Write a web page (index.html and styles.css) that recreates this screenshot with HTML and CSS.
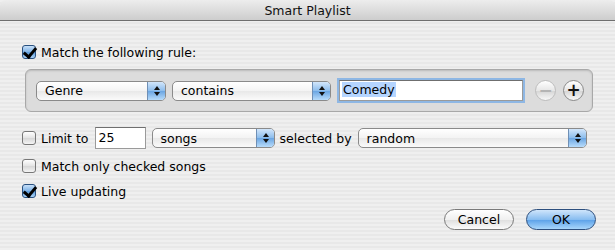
FILE: index.html
```html
<!DOCTYPE html>
<html>
<head>
    <title>Smart Playlist</title>
    <link rel="stylesheet" href="styles.css">
</head>
<body>
    <div class="dialog">
        <div class="titlebar">Smart Playlist</div>

        <div class="content">
            <div class="row row-match">
                <span class="check checked"></span>
                <span class="label">Match the following rule:</span>
            </div>

            <div class="rules">
                <div class="popup popup-genre"><span class="popup-text">Genre</span><span class="arrows"></span></div>
                <div class="popup popup-contains"><span class="popup-text">contains</span><span class="arrows"></span></div>
                <div class="field field-comedy"><span class="selected">Comedy</span></div>
                <span class="round-btn disabled">&minus;</span>
                <span class="round-btn">+</span>
            </div>

            <div class="row row-limit">
                <span class="check"></span>
                <span class="label">Limit to</span>
                <div class="field field-limit">25</div>
                <div class="popup popup-songs"><span class="popup-text">songs</span><span class="arrows"></span></div>
                <span class="label">selected by</span>
                <div class="popup popup-random"><span class="popup-text">random</span><span class="arrows"></span></div>
            </div>

            <div class="row row-checked">
                <span class="check"></span>
                <span class="label">Match only checked songs</span>
            </div>

            <div class="row row-live">
                <span class="check checked"></span>
                <span class="label">Live updating</span>
            </div>

            <div class="buttons">
                <span class="btn">Cancel</span>
                <span class="btn btn-default">OK</span>
            </div>
        </div>
    </div>
</body>
</html>
```

FILE: styles.css
```css
body { margin: 0; font-family: "DejaVu Sans", Arial, sans-serif; font-size: 12.5px; color: #000; }
.dialog { width: 615px; height: 250px; overflow: hidden; background: repeating-linear-gradient(#efefef 0 2px, #e8e8e8 2px 4px); }
.titlebar { height: 21px; line-height: 21px; text-align: center; font-size: 12.5px; color: #111; border-radius: 6px 6px 0 0; border-bottom: 1px solid #6f6f6f; box-sizing: border-box; background: linear-gradient(#ededed, #dadada 60%, #cdcdcd); }
.content { padding: 22px 19px 0 22px; }

.row { display: flex; align-items: center; height: 16px; }
.label { white-space: nowrap; margin-left: 5px; }
.row-match { margin-top: 1px; }
.row-limit { height: 22px; margin-top: 15px; }
.row-checked { margin-top: 9px; }
.row-live { margin-top: 9px; }

.check { width: 14px; height: 14px; box-sizing: border-box; border: 1px solid #777; border-radius: 3px; background: linear-gradient(#ffffff, #e4e4e4 50%, #d6d6d6 51%, #f4f4f4); position: relative; flex: none; }
.check.checked { border-color: #29507f; background: linear-gradient(#c8e0f8, #7eb2e6 50%, #5b9ad9 51%, #a9d2f8); }
.check.checked::after { content: ""; position: absolute; left: 3px; top: -1px; width: 5px; height: 10px; border: solid #000; border-width: 0 3px 3px 0; transform: rotate(40deg); }

.rules { display: flex; align-items: center; margin: 9px 0 0 3px; width: 568px; height: 43px; box-sizing: border-box; padding: 0 10px; border: 1px solid #a8a8a8; border-radius: 6px; background: #dcdcdc; box-shadow: inset 0 1px 2px rgba(0,0,0,0.15); }

.popup { display: flex; align-items: center; height: 20px; box-sizing: border-box; border: 1px solid #8a8a8a; border-radius: 5px; background: linear-gradient(#ffffff, #f3f3f3 50%, #e8e8e8 51%, #fafafa); overflow: hidden; flex: none; }
.popup-text { flex: 1; padding-left: 8px; white-space: nowrap; }
.arrows { width: 17px; height: 100%; border-left: 1px solid #6f8fb5; background: linear-gradient(#d2e6fb, #8bbcec 50%, #6aa5e2 51%, #b8dcfb); position: relative; }
.arrows::before, .arrows::after { content: ""; position: absolute; left: 6px; border-left: 3px solid transparent; border-right: 3px solid transparent; }
.arrows::before { top: 4px; border-bottom: 4px solid #111; }
.arrows::after { bottom: 4px; border-top: 4px solid #111; }

.popup-genre { width: 130px; }
.popup-contains { width: 159px; margin-left: 6px; }
.popup-songs { width: 123px; margin-left: 6px; }
.popup-random { width: 229px; margin-left: 6px; }

.field { box-sizing: border-box; background: #fff; border: 1px solid #9a9a9a; border-top-color: #6f6f6f; flex: none; white-space: nowrap; }
.field-comedy { width: 184px; height: 21px; margin-left: 8px; padding: 1px 2px; box-shadow: 0 0 0 2px #8eb7e4; }
.field-comedy .selected { background: #b5d5ff; padding: 0 1px; }
.field-limit { width: 51px; height: 22px; margin-left: 6px; padding: 2px 3px; }

.round-btn { width: 21px; height: 21px; box-sizing: border-box; border-radius: 50%; border: 1px solid #8a8a8a; background: linear-gradient(#ffffff, #e6e6e6 50%, #d4d4d4 51%, #f8f8f8); display: flex; align-items: center; justify-content: center; font-weight: bold; font-size: 17px; line-height: 1; color: #111; flex: none; margin-left: 7px; }
.round-btn:first-of-type { margin-left: 12px; }
.round-btn.disabled { color: #b4b4b4; border-color: #bdbdbd; }

.buttons { display: flex; justify-content: flex-end; gap: 12px; margin-top: 10px; }
.btn { width: 70px; height: 21px; box-sizing: border-box; border: 1px solid #7a7a7a; border-radius: 11px; background: linear-gradient(#ffffff, #f0f0f0 50%, #dedede 51%, #fbfbfb); text-align: center; line-height: 19px; }
.btn-default { border-color: #2d4f7e; background: linear-gradient(#cfe5fb, #88bdf0 50%, #5aa0e8 51%, #a8d6fb); }
```
